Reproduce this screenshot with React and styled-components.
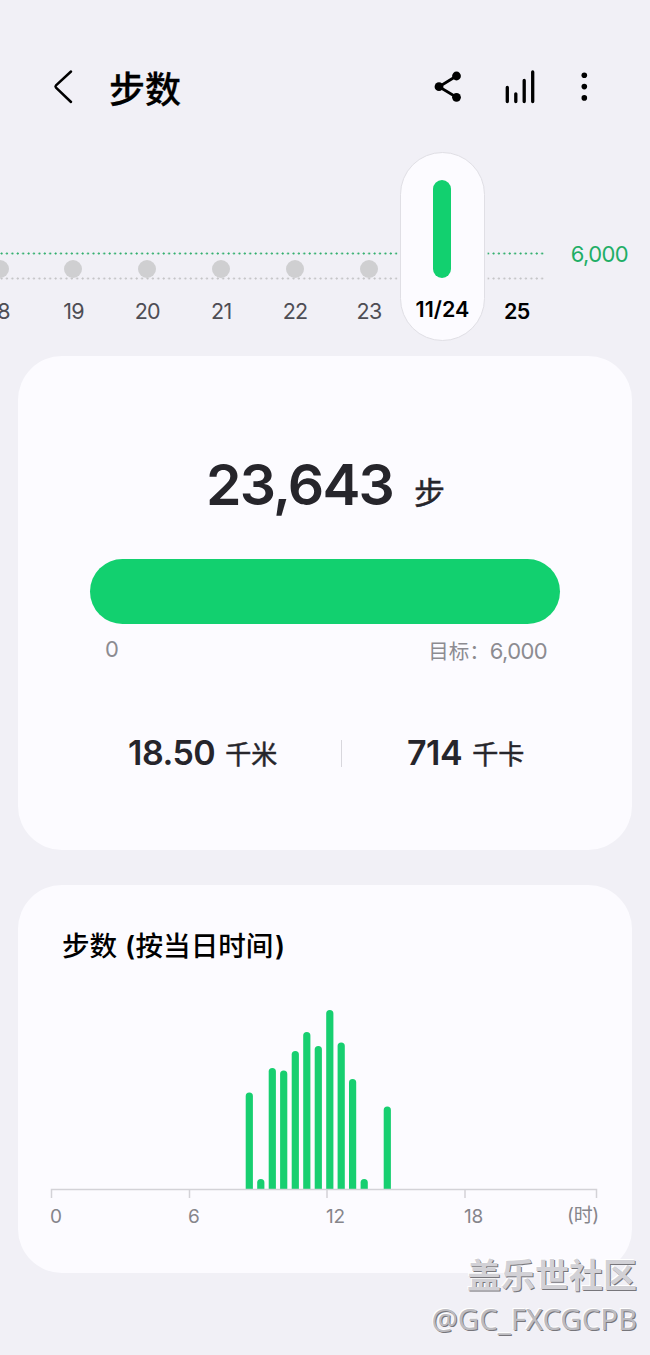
import React from "react";
import styled, { createGlobalStyle } from "styled-components";

const latin = `"Inter", "Noto Sans CJK SC", sans-serif`;
const cjk = `"Noto Sans CJK SC", sans-serif`;

const Global = createGlobalStyle`
  * { box-sizing: border-box; }
  body { margin: 0; background: #f1f0f6; }
`;

const Screen = styled.div`
  position: relative;
  width: 650px;
  height: 1355px;
  overflow: hidden;
  background: #f1f0f6;
  font-family: ${latin};
  color: #26252b;
`;

const Header = styled.header`
  height: 151px;
  padding: 66px 54px 0 50px;
  display: flex;
  align-items: flex-start;
`;

const Title = styled.h1`
  flex: 1;
  margin: -2px 0 0 33px;
  font: 500 36px/46px ${cjk};
  -webkit-text-stroke: 0.3px #000;
  color: #000;
`;

const Actions = styled.div`
  display: flex;
  align-items: center;
  height: 42px;
`;

const dots = (color) =>
  `radial-gradient(circle at 1.5px 1.5px, ${color} 0.7px, transparent 1.4px)`;

const Strip = styled.section`
  height: 190px;
  display: flex;
  align-items: flex-start;
  justify-content: space-between;
`;

const Track = styled.div`
  width: 544px;
  height: 190px;
  display: flex;
  background-image: ${dots("#2fae6c")}, ${dots("#c4c4c6")};
  background-size: 5.42px 3px;
  background-repeat: repeat-x;
  background-position: 0 101px, 0 126px;
`;

const Day = styled.div`
  flex: 0 0 73.9px;
  display: flex;
  flex-direction: column;
  align-items: center;
  padding-top: 109px;
  font-size: 21.5px;
  letter-spacing: ${(p) => (p.$strong ? -0.6 : -0.8)}px;
  line-height: 26px;
  font-weight: ${(p) => (p.$strong ? 600 : 400)};
  color: ${(p) => (p.$strong ? "#000" : "#4e4d54")};
  &:first-child { margin-left: -37.4px; }
`;

const Dot = styled.i`
  width: 18px;
  height: 18px;
  margin-bottom: 19.5px;
  border-radius: 50%;
  background: ${(p) => (p.$hidden ? "transparent" : "#cfcfd1")};
`;

const Pill = styled.div`
  flex: 0 0 85px;
  height: 189px;
  margin: 1px -5px 0 -6px;
  padding-top: 26.5px;
  display: flex;
  flex-direction: column;
  align-items: center;
  border: 1.5px solid #e0dfe5;
  border-radius: 43px;
  background: #fcfbff;
  box-shadow: 0 0 0 2.5px #f1f0f6;
  font-size: 21.5px;
  letter-spacing: 0;
  line-height: 26px;
  font-weight: 600;
  color: #000;
`;

const PillBar = styled.i`
  width: 18px;
  height: 98px;
  margin-bottom: 18px;
  border-radius: 9px;
  background: #12d06f;
`;

const Goal = styled.span`
  margin: 89px 22px 0 0;
  font-size: 22px;
  letter-spacing: -0.6px;
  line-height: 28px;
  color: #1fae66;
`;

const Card = styled.section`
  width: 614px;
  height: ${(p) => p.$height}px;
  margin: ${(p) => p.$top}px 18px 0;
  border-radius: 44px;
  background: #fcfbff;
`;

const Total = styled.div`
  height: 203px;
  padding: 95px 0 0 188px;
  display: flex;
  align-items: baseline;
  font-size: 57px;
  letter-spacing: -1.8px;
  font-weight: 600;
  line-height: 68px;
`;

const Unit = styled.span`
  margin-left: ${(p) => p.$gap}px;
  position: relative;
  top: -1px;
  font: 400 ${(p) => p.$size}px/1 ${cjk};
  letter-spacing: 0;
  -webkit-text-stroke: 0.5px currentColor;
`;

const Progress = styled.div`
  width: 470px;
  height: 65px;
  margin-left: 72px;
  border-radius: 33px;
  background: #12d06f;
`;

const Range = styled.div`
  padding: 10px 85px 0 87px;
  display: flex;
  justify-content: space-between;
  font-size: 22px;
  letter-spacing: -0.6px;
  line-height: 30px;
  color: #8c8b91;
`;

const GoalText = styled.span`
  line-height: 32px;
`;

const GoalLabel = styled.span`
  font: 400 20.5px/32px ${cjk};
  letter-spacing: 0;
`;

const Metrics = styled.div`
  margin-top: 61px;
  height: 50px;
  padding-left: 110px;
  display: flex;
  align-items: center;
`;

const Metric = styled.div`
  width: ${(p) => p.$width}px;
  display: flex;
  align-items: baseline;
  font-size: 34px;
  letter-spacing: -0.5px;
  font-weight: 600;
  line-height: 46px;
`;

const Divider = styled.i`
  width: 1px;
  height: 27px;
  margin-right: 65px;
  background: #d8d7dd;
`;

const CardTitle = styled.h2`
  height: 80px;
  margin: 0;
  padding: 39px 0 0 44px;
  font: 500 27.6px/40px ${cjk};
  color: #000;
`;

const Paren = styled.span`
  margin: 0 0.5px 0 1.5px;
  font-family: "Inter", sans-serif;
  font-weight: 600;
  font-size: 27px;
  line-height: 1;
`;

const Chart = styled.svg`
  display: block;
  margin: 40px 0 0 32px;
`;

const Hours = styled.div`
  padding: 4px 33px 0 32px;
  display: flex;
  font-size: 19px;
  letter-spacing: -0.3px;
  line-height: 26px;
  color: #86858b;
`;

const Hour = styled.span`
  width: 138px;
  &:last-child { width: auto; margin: -1px 0 0 auto; }
  &:nth-child(4) { width: 90px; }
`;

const Watermark = styled.div`
  position: absolute;
  right: 13px;
  top: 1251px;
  text-align: right;
  color: #d2d1d6;
  text-shadow: 1px 1px 0 #77767b, -1px -1px 0 #ffffff;
`;

const Community = styled.div`
  font: 700 34px/46px ${cjk};
`;

const Author = styled.div`
  font: 400 29.3px/44px "Noto Sans", sans-serif;
  color: #bcbbc0;
`;

const days = ["18", "19", "20", "21", "22", "23"];

const bars = [
  [249.3, 1092.5], [260.8, 1179], [272.3, 1068], [283.7, 1070.5],
  [295.3, 1051], [306.8, 1032], [318.3, 1046], [329.8, 1010],
  [341.2, 1042.5], [352.6, 1079], [364.2, 1179], [387.3, 1106.5],
];

const barPath = (x, y) =>
  `M${x - 3.6} 1189V${y + 3.6}a3.6 3.6 0 0 1 7.2 0V1189z`;

export default function App() {
  return (
    <Screen>
      <Global />
      <Header>
        <svg width="26" height="42" viewBox="50 66 26 42" fill="none" stroke="#000" strokeWidth="2.5" strokeLinecap="round" strokeLinejoin="round">
          <path d="M71 71.5 56 85.4Q55 86.5 56 87.6L71 102" />
        </svg>
        <Title>步数</Title>
        <Actions>
          <svg width="162" height="42" viewBox="434 66 162 42">
            <path d="M456.5 76 439 86.7 456.5 97.3" fill="none" stroke="#000" strokeWidth="2.8" />
            <circle cx="439" cy="86.7" r="4.4" />
            <circle cx="456.5" cy="76" r="4.4" />
            <circle cx="456.5" cy="97.3" r="4.4" />
            <path d="M507.3 87.5V101.5M515.8 93.8V101.5M524.2 80.5V101.5M532.7 72V101.5" stroke="#000" strokeWidth="3.3" strokeLinecap="round" />
            <circle cx="584.3" cy="75.3" r="2.8" />
            <circle cx="584.3" cy="86.6" r="2.8" />
            <circle cx="584.3" cy="97.9" r="2.8" />
          </svg>
        </Actions>
      </Header>

      <Strip>
        <Track>
          {days.map((d) => (
            <Day key={d}><Dot />{d}</Day>
          ))}
          <Pill><PillBar />11/24</Pill>
          <Day $strong><Dot $hidden />25</Day>
        </Track>
        <Goal>6,000</Goal>
      </Strip>

      <Card $top={15} $height={494}>
        <Total>23,643<Unit $gap={21} $size={31}>步</Unit></Total>
        <Progress />
        <Range><span>0</span><GoalText><GoalLabel>目标：</GoalLabel>6,000</GoalText></Range>
        <Metrics>
          <Metric $width={213}>18.50<Unit $gap={10} $size={26}>千米</Unit></Metric>
          <Divider />
          <Metric>714<Unit $gap={10} $size={26}>千卡</Unit></Metric>
        </Metrics>
      </Card>

      <Card $top={35} $height={388}>
        <CardTitle>步数 <Paren>(</Paren>按当日时间<Paren>)</Paren></CardTitle>
        <Chart width="550" height="195" viewBox="50 1005 550 195">
          {bars.map(([x, y]) => <path key={x} d={barPath(x, y)} fill="#17cf70" />)}
          <path d="M51.5 1198V1189.5H596.5V1198M189.5 1189V1198M327 1189V1198M465 1189V1198" fill="none" stroke="#d3d2d7" strokeWidth="1.5" />
        </Chart>
        <Hours>
          {["0", "6", "12", "18", "(时)"].map((h) => <Hour key={h}>{h}</Hour>)}
        </Hours>
      </Card>

      <Watermark>
        <Community>盖乐世社区</Community>
        <Author>@GC_FXCGCPB</Author>
      </Watermark>
    </Screen>
  );
}
